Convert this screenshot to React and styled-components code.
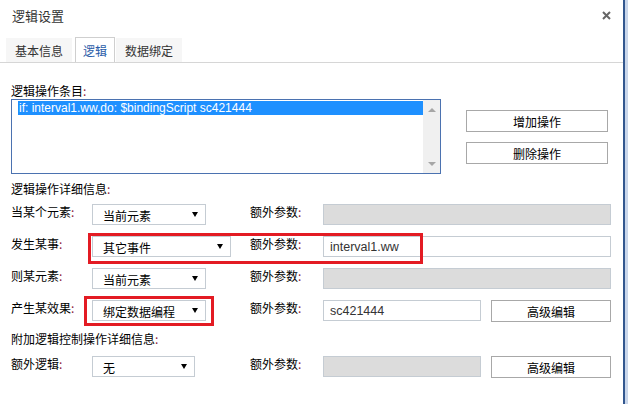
import React from 'react';
import styled, { createGlobalStyle } from 'styled-components';

const GlobalStyle = createGlobalStyle`
  body {
    margin: 0;
    background: #fff;
    font-family: "Noto Sans CJK SC", "Liberation Sans", sans-serif;
  }
`;

const Frame = styled.div`
  display: flex;
  width: 628px;
  height: 404px;
  overflow: hidden;
  background: #fff;
`;

const Dialog = styled.div`
  flex: 1;
  border-right: 2px solid #33578f;
`;

const Edge = styled.div`
  width: 3px;
  background: #c9d6ea;
`;

const TitleBar = styled.div`
  display: flex;
  justify-content: space-between;
  align-items: center;
  height: 30px;
  padding: 0 12px 0 12px;
  font-size: 13px;
  color: #333;
`;

const TabBar = styled.div`
  display: flex;
  align-items: flex-end;
  height: 25px;
  margin-top: 7px;
  padding-left: 6px;
  border-bottom: 1px solid #d6d6d6;
`;

const Tab = styled.div`
  display: flex;
  align-items: center;
  height: 24px;
  padding: 0 ${p => (p.$active ? '7px' : '9px')};
  margin-right: ${p => (p.$active ? '1px' : '3px')};
  font-size: 12px;
  color: ${p => (p.$active ? '#2a5ca8' : '#333')};
  background: ${p => (p.$active ? '#fff' : '#f6f6f6')};
  border: ${p => (p.$active ? '1px solid #cfcfcf' : 'none')};
  border-bottom: none;
`;

const Body = styled.div`
  padding: 0 12px 0 11px;
`;

const SectionLabel = styled.div`
  margin-top: ${p => p.$top}px;
  font-size: 12px;
  line-height: 16px;
  color: #000;
`;

const Colon = styled.span`
  color: #8b1c3c;
`;

const TopSection = styled.div`
  display: flex;
  gap: 25px;
`;

const ListBox = styled.div`
  display: flex;
  width: 430px;
  height: 75px;
  box-sizing: border-box;
  border: 1px solid #4b72b0;
`;

const ListItems = styled.div`
  flex: 1;
  padding: 1px 0 0 6px;
`;

const ListItem = styled.div`
  height: 14px;
  line-height: 14px;
  padding-left: 1px;
  font-family: "Liberation Sans", Arial, sans-serif;
  font-size: 12px;
  color: ${p => (p.$selected ? '#fff' : '#000')};
  background: ${p => (p.$selected ? '#1e90ff' : 'transparent')};
`;

const ScrollTrack = styled.div`
  display: flex;
  flex-direction: column;
  justify-content: space-between;
  align-items: center;
  width: 17px;
  padding: 8px 0 7px;
  box-sizing: border-box;
  background: #f0f0f0;
`;

const Arrow = styled.div`
  width: 0;
  height: 0;
  border-left: 4px solid transparent;
  border-right: 4px solid transparent;
  ${p => (p.$up ? 'border-bottom' : 'border-top')}: 4px solid #a6a6a6;
`;

const ButtonColumn = styled.div`
  display: flex;
  flex-direction: column;
  gap: 10px;
  padding-top: 11px;
`;

const Button = styled.div`
  display: flex;
  align-items: center;
  justify-content: center;
  width: ${p => (p.$width ? `${p.$width}px` : 'auto')};
  flex: ${p => (p.$width ? 'none' : '1')};
  height: 22px;
  box-sizing: border-box;
  border: 1px solid #a8a8a8;
  background: #fff;
  font-size: 12px;
  color: #000;
`;

const Row = styled.div`
  display: grid;
  grid-template-columns: 81px 158px 73px 1fr;
  height: 21px;
  margin-top: ${p => p.$top}px;
`;

const Label = styled.div`
  font-size: 12px;
  line-height: 16px;
  color: #000;
`;

const SelectBox = styled.div`
  position: relative;
  display: flex;
  align-items: center;
  justify-content: space-between;
  width: ${p => p.$width}px;
  height: 21px;
  box-sizing: border-box;
  padding: 2px 7px 0 10px;
  border: 1px solid #c5ccd3;
  background: #fff;
  font-size: 12px;
  color: #000;
`;

const Caret = styled.div`
  width: 0;
  height: 0;
  margin-top: -2px;
  border-left: 3px solid transparent;
  border-right: 3px solid transparent;
  border-top: 5px solid #000;
`;

const Highlight = styled.div`
  position: absolute;
  left: ${p => p.$left}px;
  top: ${p => p.$top}px;
  width: ${p => p.$width}px;
  height: ${p => p.$height}px;
  box-sizing: border-box;
  border: 3px solid #e31b23;
  pointer-events: none;
`;

const Field = styled.div`
  display: flex;
  align-items: center;
  width: ${p => (p.$width ? `${p.$width}px` : 'auto')};
  height: 21px;
  box-sizing: border-box;
  padding: 0 0 0 6px;
  border: 1px solid #c5ccd3;
  background: ${p => (p.$disabled ? '#dcdcdc' : '#fff')};
  font-family: "Liberation Sans", Arial, sans-serif;
  font-size: 12.5px;
  color: #333;
`;

const FieldGroup = styled.div`
  display: flex;
  gap: 10px;
`;

function Close() {
  return (
    <svg width="9" height="9" viewBox="0 0 9 9">
      <path d="M1 1L8 8M8 1L1 8" stroke="#666" strokeWidth="2" />
    </svg>
  );
}

function Select({ width, value, highlight }) {
  return (
    <SelectBox $width={width}>
      <span>{value}</span>
      <Caret />
      {highlight && <Highlight {...highlight} />}
    </SelectBox>
  );
}

function LabelText({ children }) {
  return (
    <Label>
      {children}
      <Colon>:</Colon>
    </Label>
  );
}

export default function App() {
  return (
    <>
      <GlobalStyle />
      <Frame>
        <Dialog>
          <TitleBar>
            <span>逻辑设置</span>
            <Close />
          </TitleBar>
          <TabBar>
            <Tab>基本信息</Tab>
            <Tab $active>逻辑</Tab>
            <Tab>数据绑定</Tab>
          </TabBar>
          <Body>
            <SectionLabel $top={20}>
              逻辑操作条目<Colon>:</Colon>
            </SectionLabel>
            <TopSection>
              <ListBox>
                <ListItems>
                  <ListItem $selected>if: interval1.ww,do: $bindingScript sc421444</ListItem>
                </ListItems>
                <ScrollTrack>
                  <Arrow $up />
                  <Arrow />
                </ScrollTrack>
              </ListBox>
              <ButtonColumn>
                <Button $width={142}>增加操作</Button>
                <Button $width={142}>删除操作</Button>
              </ButtonColumn>
            </TopSection>

            <SectionLabel $top={7}>
              逻辑操作详细信息<Colon>:</Colon>
            </SectionLabel>
            <Row $top={7}>
              <LabelText>当某个元素</LabelText>
              <Select width={114} value="当前元素" />
              <LabelText>额外参数</LabelText>
              <Field $disabled />
            </Row>
            <Row $top={11}>
              <LabelText>发生某事</LabelText>
              <Select
                width={139}
                value="其它事件"
                highlight={{ $left: -5, $top: -4, $width: 335, $height: 31 }}
              />
              <LabelText>额外参数</LabelText>
              <Field>interval1.ww</Field>
            </Row>
            <Row $top={11}>
              <LabelText>则某元素</LabelText>
              <Select width={114} value="当前元素" />
              <LabelText>额外参数</LabelText>
              <Field $disabled />
            </Row>
            <Row $top={11}>
              <LabelText>产生某效果</LabelText>
              <Select
                width={114}
                value="绑定数据编程"
                highlight={{ $left: -9, $top: -5, $width: 130, $height: 30 }}
              />
              <LabelText>额外参数</LabelText>
              <FieldGroup>
                <Field $width={158}>sc421444</Field>
                <Button>高级编辑</Button>
              </FieldGroup>
            </Row>

            <SectionLabel $top={10}>
              附加逻辑控制操作详细信息<Colon>:</Colon>
            </SectionLabel>
            <Row $top={9}>
              <LabelText>额外逻辑</LabelText>
              <Select width={103} value="无" />
              <LabelText>额外参数</LabelText>
              <FieldGroup>
                <Field $width={158} $disabled />
                <Button>高级编辑</Button>
              </FieldGroup>
            </Row>
          </Body>
        </Dialog>
        <Edge />
      </Frame>
    </>
  );
}
